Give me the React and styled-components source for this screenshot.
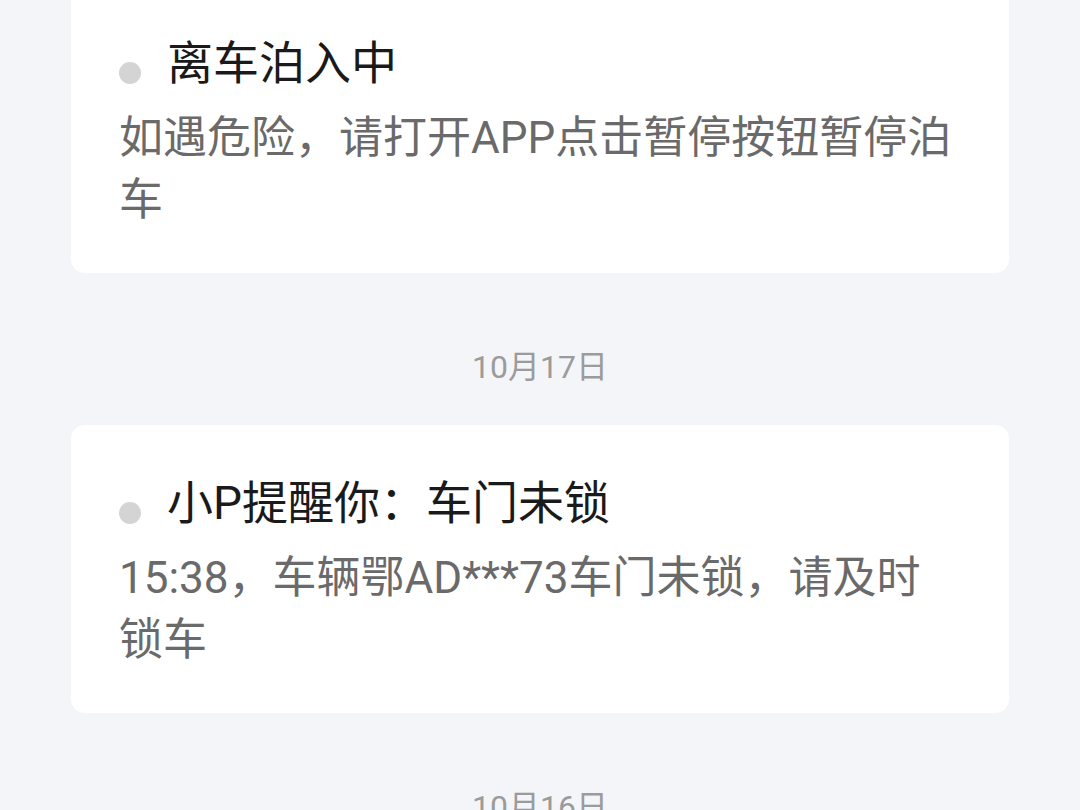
import React from 'react';
import styled, { createGlobalStyle } from 'styled-components';

const GlobalStyle = createGlobalStyle`
  html, body {
    margin: 0;
    padding: 0;
    background: #f4f5f9;
    font-family: Roboto, "Noto Sans CJK SC", "Noto Sans", sans-serif;
  }
`;

const Page = styled.div`
  width: 1080px;
  height: 810px;
  overflow: hidden;
  background: #f4f5f9;
`;

const Feed = styled.div`
  display: flex;
  flex-direction: column;
  align-items: center;
  margin-top: -15px;
`;

const Card = styled.div`
  box-sizing: border-box;
  width: 938px;
  background: #ffffff;
  border-radius: 14px;
  padding: 50px 48px 42px;
`;

const TitleRow = styled.div`
  display: flex;
  align-items: center;
  height: 56px;
`;

const Dot = styled.span`
  width: 22px;
  height: 22px;
  border-radius: 50%;
  background: #d4d4d4;
  margin-top: 20px;
  margin-right: 26px;
  flex-shrink: 0;
`;

const Title = styled.span`
  font-size: 46px;
  color: #1a1a1a;
  line-height: 56px;
`;

const Body = styled.div`
  margin-top: 16px;
  font-size: 44px;
  line-height: 62px;
  color: #6a6a6a;
`;

const DateLabel = styled.div`
  padding: 72px 0 36px;
  font-size: 32px;
  line-height: 44px;
  color: #9b9b9b;
  text-align: center;
`;

const messages = [
  {
    title: '离车泊入中',
    body: '如遇危险，请打开APP点击暂停按钮暂停泊车',
  },
  { date: '10月17日' },
  {
    title: '小P提醒你：车门未锁',
    body: '15:38，车辆鄂AD***73车门未锁，请及时锁车',
  },
  { date: '10月16日' },
];

const App = () => (
  <Page>
    <GlobalStyle />
    <Feed>
      {messages.map((m, i) =>
        m.date ? (
          <DateLabel key={i}>{m.date}</DateLabel>
        ) : (
          <Card key={i}>
            <TitleRow>
              <Dot />
              <Title>{m.title}</Title>
            </TitleRow>
            <Body>{m.body}</Body>
          </Card>
        )
      )}
    </Feed>
  </Page>
);

export default App;
